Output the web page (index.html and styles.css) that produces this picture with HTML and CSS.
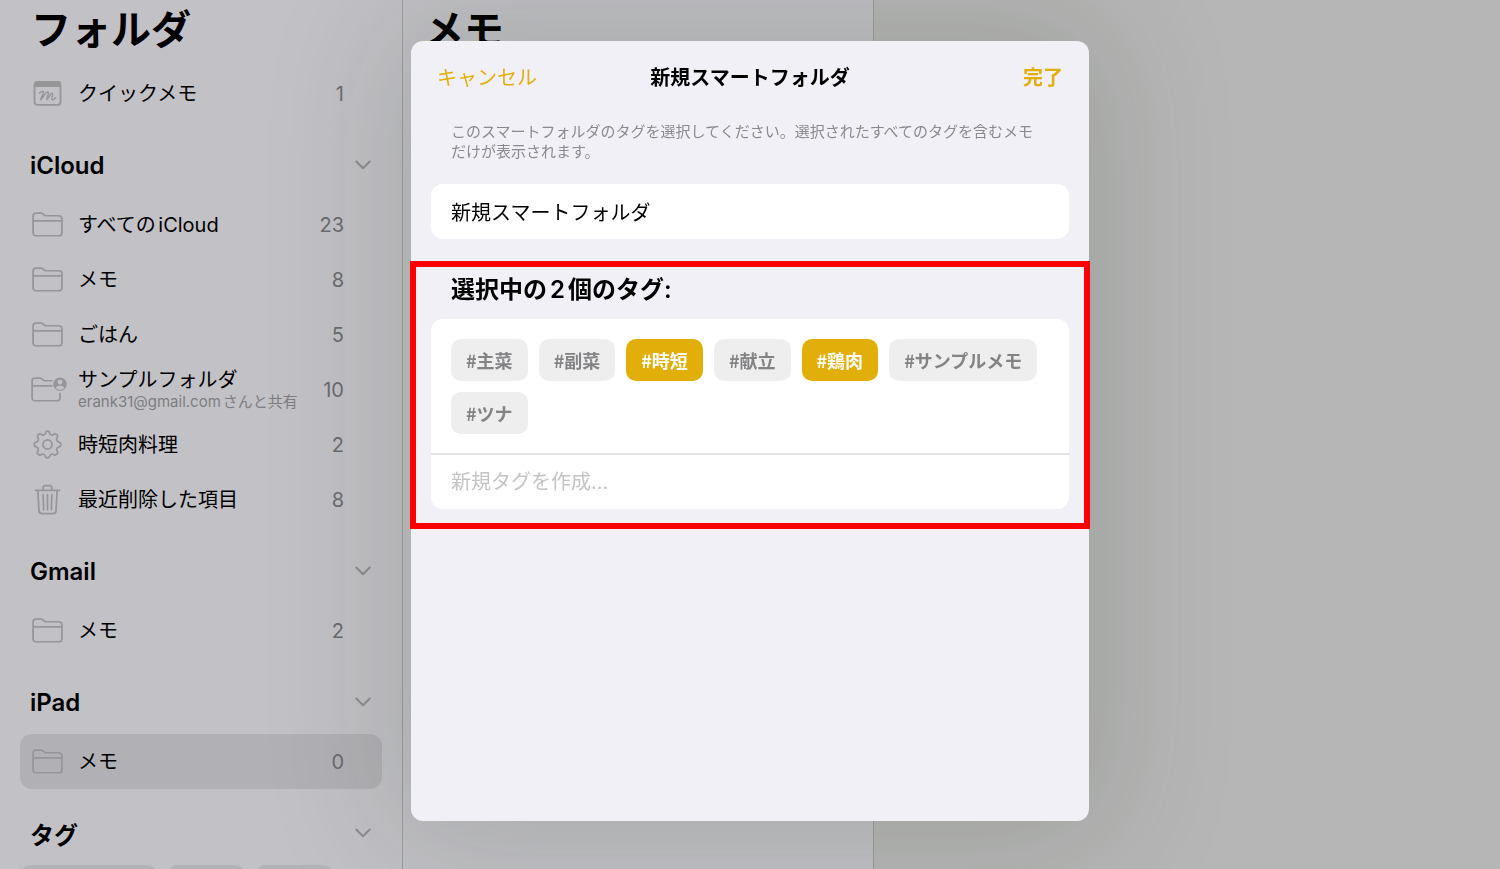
FILE: index.html
```html
<!DOCTYPE html>
<html lang='ja'>
	<head>
		<meta charset='utf-8'>
		<meta name='viewport' content='width=device-width, initial-scale=1'>
		<title>新規スマートフォルダ</title>
		<link rel='stylesheet' href='styles.css'>
	</head>
	<body>
		<svg class='symbols' aria-hidden='true'>
			<symbol id='folder' viewBox='0 0 32 26'>
				<path d='M1 21.5V4.2C1 2.2 2 1.200 4 1.200H8.600C10 1.200 10.700 1.500 11.600 2.300L12.500 3.100C13.200 3.700 13.700 3.900 14.800 3.900H27.500C29.800 3.900 31 5 31 7.200V21.500C31 23.700 29.900 24.700 27.800 24.700H4.200C2.100 24.700 1 23.700 1 21.500ZM1 9.200H31'/>
			</symbol>
			<symbol id='chevron' viewBox='0 0 16 10'>
				<path d='M1.300 1.500L8 8.300L14.700 1.500'/>
			</symbol>
		</svg>
		<div class='app'>
			<nav class='sidebar'>
				<h1>フォルダ</h1>
				<a class='row' href='#'>
					<svg class='icon' viewBox='0 0 31 25'>
						<rect x='2.500' y='0.900' width='26' height='23' rx='3'/>
						<path class='fill' d='M2 6V4Q2 0 5.500 0H25.500Q29 0 29 4V6Z'/>
						<path class='thin' d='M7.500 12C9 10.500 11.500 9.500 11.500 11C11.500 13 8 18.500 8.500 18.800C9.500 19.200 13.500 10.500 16 11C17.800 11.500 14 18.200 14.800 18.600C16 19 18.300 11.800 20.300 12.300C21.800 13 18.800 17.800 20 18.600C21.200 19.200 22.700 17.500 23.800 16.500'/>
					</svg>
					<span class='name'>クイックメモ</span>
					<span class='count'>1</span>
				</a>
				<h2>iCloud <svg class='chevron'><use href='#chevron'/></svg></h2>
				<a class='row' href='#'>
					<svg class='icon'><use href='#folder'/></svg>
					<span class='name'>すべてのiCloud</span>
					<span class='count'>23</span>
				</a>
				<a class='row' href='#'>
					<svg class='icon'><use href='#folder'/></svg>
					<span class='name'>メモ</span>
					<span class='count'>8</span>
				</a>
				<a class='row' href='#'>
					<svg class='icon'><use href='#folder'/></svg>
					<span class='name'>ごはん</span>
					<span class='count'>5</span>
				</a>
				<a class='row' href='#'>
					<svg class='icon' viewBox='0 0 32 26'>
						<path d='M29 17V21.500C29 23.700 28 24.700 25.800 24.700H3.200C1.100 24.700 0 23.700 0 21.500V4.200C0 2.200 1 1.200 3 1.200H7.600C9 1.200 9.700 1.500 10.600 2.300L11.500 3.100C12.200 3.700 12.700 3.900 13.800 3.900H20.500M0 9.200H20.500'/>
						<circle class='fill' cx='29' cy='7.500' r='7'/>
						<circle class='hole' cx='29' cy='5.300' r='2.500'/>
						<path class='hole' d='M24.300 11.500Q25.500 8.800 29 8.800T33.700 11.500Q31.800 13.400 29 13.400T24.300 11.500Z'/>
					</svg>
					<span class='name'>サンプルフォルダ<small>erank31@gmail.comさんと共有</small></span>
					<span class='count'>10</span>
				</a>
				<a class='row' href='#'>
					<svg class='icon tall' viewBox='0 0 32 32'>
						<path d='M13.800 4.500Q14.100 2.200 16 2.200T18.200 4.500Q18.600 6 20.200 6.300Q21.300 6.500 22.300 5.500Q24.100 4.300 25.600 5.800T25.900 9Q25.100 10.300 25.600 11.500Q26.200 13.200 27.800 13.500Q29.800 14 29.800 16T27.800 18.400Q26.200 18.900 25.600 20.300Q25.100 21.600 26 22.800Q27.200 24.500 25.700 26T22.500 26.500Q21.200 25.500 20 26.100Q18.500 26.600 18.300 28.200Q17.900 29.800 16 29.800T13.700 28.200Q13.400 26.600 12 26.100Q10.700 25.500 9.500 26.500Q7.700 27.500 6.300 26T6 22.800Q6.900 21.600 6.400 20.300Q5.800 18.900 4.200 18.400Q2.200 17.900 2.200 16T4.200 13.500Q5.800 13.200 6.400 11.500Q6.900 10.300 6.100 9Q4.900 7.300 6.400 5.800T9.700 5.500Q10.700 6.500 11.800 6.300Q13.400 6 13.800 4.500Z'/>
						<circle cx='16' cy='16' r='4.700'/>
					</svg>
					<span class='name'>時短肉料理</span>
					<span class='count'>2</span>
				</a>
				<a class='row' href='#'>
					<svg class='icon tall' viewBox='0 0 32 32'>
						<path d='M3.500 6.500H28.500M11.500 6.500V4Q11.500 1.700 13.800 1.700H18.200Q20.500 1.700 20.500 4V6.500M6 6.500L7.200 27.500Q7.400 30.500 10.300 30.500H21.700Q24.600 30.500 24.800 27.500L26 6.500M11.500 11L12 26.500M16 11V26.500M20.500 11L20 26.500'/>
					</svg>
					<span class='name'>最近削除した項目</span>
					<span class='count'>8</span>
				</a>
				<h2>Gmail <svg class='chevron'><use href='#chevron'/></svg></h2>
				<a class='row' href='#'>
					<svg class='icon'><use href='#folder'/></svg>
					<span class='name'>メモ</span>
					<span class='count'>2</span>
				</a>
				<h2>iPad <svg class='chevron'><use href='#chevron'/></svg></h2>
				<a class='row selected' href='#'>
					<svg class='icon'><use href='#folder'/></svg>
					<span class='name'>メモ</span>
					<span class='count'>0</span>
				</a>
				<h2>タグ <svg class='chevron'><use href='#chevron'/></svg></h2>
				<div class='sidebar-tags'>
					<span class='wide'></span>
					<span></span>
					<span></span>
				</div>
			</nav>
			<section class='notes'>
				<h1>メモ</h1>
			</section>
			<main class='detail'></main>
		</div>
		<div class='overlay'>
			<form class='dialog' role='dialog' aria-labelledby='dialog_title'>
				<header>
					<button type='button' class='cancel'>キャンセル</button>
					<h3 id='dialog_title'>新規スマートフォルダ</h3>
					<button type='button' class='done'>完了</button>
				</header>
				<p>このスマートフォルダのタグを選択してください。選択されたすべてのタグを含むメモだけが表示されます。</p>
				<input class='folder-name' type='text' aria-label='フォルダ名' value='新規スマートフォルダ'>
				<section class='highlight'>
					<h4>選択中の2個のタグ:</h4>
					<div class='card'>
						<div class='tags'>
							<button type='button' aria-pressed='false'>#主菜</button>
							<button type='button' aria-pressed='false'>#副菜</button>
							<button type='button' aria-pressed='true'>#時短</button>
							<button type='button' aria-pressed='false'>#献立</button>
							<button type='button' aria-pressed='true'>#鶏肉</button>
							<button type='button' aria-pressed='false'>#サンプルメモ</button>
							<button type='button' aria-pressed='false'>#ツナ</button>
						</div>
						<input class='new-tag' type='text' aria-label='新規タグ' placeholder='新規タグを作成...'>
					</div>
				</section>
			</form>
		</div>
	</body>
</html>
```
FILE: styles.css
```css
:root {
	--sidebar: rgb(194, 193, 198);
	--notes: rgb(193, 192, 197);
	--detail: rgb(182, 182, 182);
	--line: rgb(155, 158, 158);
	--icon: rgb(150, 150, 152);
	--yellow: rgb(226, 174, 10);
	--sheet: rgb(241, 240, 246);
}
* {
	box-sizing: border-box;
}
body {
	margin: 0;
	height: 100vh;
	overflow: hidden;
	color: black;
	font-family: "Inter","Noto Sans CJK JP",sans-serif;
	font-size: 20px;
	text-autospace: normal;
}
h1, h2, h3, h4, p {
	margin: 0;
}
button, input {
	font: inherit;
	color: inherit;
	border: 0;
	padding: 0;
	background: none;
}
.symbols {
	display: none;
}
.app {
	display: grid;
	grid-template-columns: 403px 471px 1fr;
	height: 100%;
}
h1 {
	font-size: 40px;
	font-weight: 700;
	line-height: 60px;
	height: 66px;
	padding-left: 11px;
}

/* sidebar */
.sidebar {
	padding: 0 20px;
	background-color: var(--sidebar);
	border-right: 1px solid var(--line);
	overflow: hidden;
}
h2 {
	display: flex;
	align-items: center;
	justify-content: space-between;
	height: 76px;
	padding: 12px 11px 0 10px;
	font-size: 24px;
	font-weight: 600;
}
.row {
	display: flex;
	align-items: center;
	gap: 15px;
	height: 55px;
	padding: 0 38px 0 12px;
	border-radius: 12px;
	color: inherit;
	text-decoration: none;
}
.selected {
	background-color: rgb(177, 176, 181);
}
.icon {
	width: 31px;
	height: 25px;
	overflow: visible;
}
.tall {
	height: 31px;
}
.icon, .chevron {
	flex: none;
	fill: none;
	stroke: var(--icon);
	stroke-width: 1.8;
	stroke-linecap: round;
	stroke-linejoin: round;
}
.chevron {
	width: 16px;
	height: 10px;
	stroke: rgb(140, 141, 143);
	stroke-width: 2;
}
.thin {
	stroke-width: 1.4;
}
.fill {
	fill: var(--icon);
	stroke: none;
}
.hole {
	fill: var(--sidebar);
	stroke: none;
}
.name {
	flex: 1;
	line-height: 24px;
	white-space: nowrap;
}
.name small {
	display: block;
	font-size: 15px;
	line-height: 20px;
	color: rgb(125, 125, 129);
}
.count {
	color: rgb(107, 107, 111);
}
.sidebar-tags {
	display: flex;
	gap: 10px;
}
.sidebar-tags span {
	width: 78px;
	height: 42px;
	border-radius: 10px;
	background-color: rgb(180, 179, 184);
}
.sidebar-tags .wide {
	width: 137px;
}

/* notes list and note */
.notes {
	padding: 0 10px;
	background-color: var(--notes);
	border-right: 1px solid var(--line);
}
.detail {
	background-color: var(--detail);
}

/* dialog */
.overlay {
	position: fixed;
	inset: 0;
	display: flex;
	justify-content: center;
	padding: 41px 20px 48px;
}
.dialog {
	width: 100%;
	max-width: 678px;
	padding: 0 20px;
	border-radius: 12px;
	background-color: var(--sheet);
	box-shadow: 0 0 130px 20px rgba(30, 45, 20, 0.15);
}
.dialog header {
	display: grid;
	grid-template-columns: 1fr auto 1fr;
	align-items: center;
	height: 70px;
	padding: 0 6px;
}
h3 {
	font-size: 20px;
	font-weight: 600;
}
.cancel, .done {
	justify-self: start;
	color: var(--yellow);
}
.done {
	justify-self: end;
	font-weight: 600;
}
.dialog p {
	padding: 11px 28px 22px 20px;
	font-size: 15px;
	line-height: 20px;
	color: rgb(138, 138, 142);
}
.dialog input {
	display: block;
	width: 100%;
	height: 55px;
	padding: 0 20px;
}
.dialog .new-tag {
	height: 54px;
}
.folder-name, .card {
	border-radius: 12px;
	background-color: white;
}
.highlight {
	margin: 22px -21px 0;
	padding: 0 15px 14px;
	border: 6px solid red;
}
h4 {
	padding: 0 20px 6px;
	font-size: 24px;
	font-weight: 600;
	line-height: 46px;
}
.tags {
	display: flex;
	flex-wrap: wrap;
	gap: 11px;
	padding: 20px 20px 19px;
	border-bottom: 2px solid rgb(228, 228, 230);
}
.tags button {
	height: 42px;
	padding: 0 15px;
	border-radius: 10px;
	font-size: 18px;
	font-weight: 600;
	font-family: "Noto Sans CJK JP",sans-serif;
	color: rgb(131, 131, 134);
	background-color: rgb(238, 238, 238);
}
.tags button[aria-pressed=true] {
	color: white;
	background-color: var(--yellow);
}
::placeholder {
	color: rgb(196, 196, 199);
}
```
